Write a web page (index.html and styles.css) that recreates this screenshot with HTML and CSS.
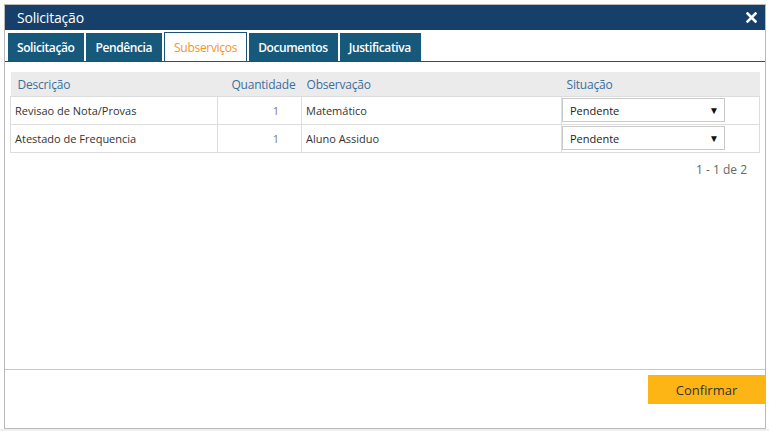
FILE: index.html
```html
<!DOCTYPE html>
<html lang="pt">
<head>
<meta charset="utf-8">
<title>Solicitação</title>
<link rel="stylesheet" href="styles.css">
</head>
<body>
<div class="dialog">
  <div class="titlebar">
    <span class="title">Solicitação</span>
    <svg class="close" width="11" height="11" viewBox="0 0 11 11"><path d="M1.5 1.5 L9.5 9.5 M9.5 1.5 L1.5 9.5" stroke="#fff" stroke-width="2.6" stroke-linecap="square"/></svg>
  </div>
  <div class="tabs">
    <div class="tab">Solicitação</div>
    <div class="tab">Pendência</div>
    <div class="tab active">Subserviços</div>
    <div class="tab">Documentos</div>
    <div class="tab">Justificativa</div>
  </div>
  <div class="content">
    <table class="grid">
      <colgroup>
        <col class="c1"><col class="c2"><col class="c3"><col class="c4">
      </colgroup>
      <thead>
        <tr><th>Descrição</th><th class="num">Quantidade</th><th>Observação</th><th>Situação</th></tr>
      </thead>
      <tbody>
        <tr>
          <td>Revisao de Nota/Provas</td><td class="num">1</td><td>Matemático</td>
          <td class="sel-cell"><div class="select"><span>Pendente</span><span class="arrow">▼</span></div></td>
        </tr>
        <tr>
          <td>Atestado de Frequencia</td><td class="num">1</td><td>Aluno Assiduo</td>
          <td class="sel-cell"><div class="select"><span>Pendente</span><span class="arrow">▼</span></div></td>
        </tr>
      </tbody>
    </table>
    <div class="pager">1 - 1 de 2</div>
  </div>
  <div class="footer">
    <button class="confirm">Confirmar</button>
  </div>
</div>
</body>
</html>
```
FILE: styles.css
```css
html, body {
  margin: 0;
  padding: 0;
}
body {
  font-family: "Open Sans", "Noto Sans", sans-serif;
  width: 769px;
  height: 431px;
  overflow: hidden;
  background: linear-gradient(#ffffff 0, #ffffff 429px, #efefef 429px);
}
.dialog {
  margin: 4px 0 0 4px;
  width: 760px;
  height: 423px;
  border: 1px solid #b9b9b9;
  background: #fff;
  display: flex;
  flex-direction: column;
}
.titlebar {
  height: 25px;
  background: #163f6a;
  display: flex;
  align-items: center;
  justify-content: space-between;
  padding: 0 8px 0 12px;
  flex: none;
}
.title {
  color: #fff;
  font-size: 14px;
  letter-spacing: -0.2px;
}
.close {
  display: block;
  margin-top: -1px;
}
.tabs {
  display: flex;
  gap: 2px;
  padding: 3px 0 0 3px;
  height: 28px;
  border-bottom: 1px solid #1d5379;
  flex: none;
}
.tab {
  background: #17597b;
  color: #fff;
  font-size: 12px;
  font-weight: 600;
  letter-spacing: -0.4px;
  padding: 0 10px 0 9px;
  display: flex;
  align-items: center;
  height: 28px;
}
.tab.active {
  background: #fff;
  color: #f7941d;
  font-weight: 400;
  letter-spacing: -0.3px;
  border: 1px solid #1d5379;
  border-bottom: none;
  height: 28px;
  margin-top: -1px;
  margin-bottom: -1px;
  padding: 0 9px;
}
.content {
  flex: 1;
  padding: 10px 6px 0 5px;
}
.grid {
  width: 749px;
  border-collapse: collapse;
  table-layout: fixed;
  font-size: 11px;
  color: #333;
}
.c1 { width: 207px; }
.c2 { width: 84px; }
.c3 { width: 260px; }
.c4 { width: 198px; }
.grid thead tr {
  background: #ebebeb;
  height: 24px;
}
.grid th {
  font-weight: 400;
  font-size: 12px;
  color: #3b6f9b;
  text-align: left;
  padding: 2px 0 0 7px;
  letter-spacing: -0.2px;
  white-space: nowrap;
}
.grid th.num {
  text-align: right;
  padding: 2px 6px 0 0;
}
.grid th:nth-child(3) { padding-left: 5px; }
.grid th:nth-child(4) { padding-left: 5px; }
.grid tbody tr {
  height: 28px;
}
.grid td {
  border: 1px solid #dddddd;
  padding: 0 0 0 4px;
  white-space: nowrap;
}
.grid td.num {
  text-align: right;
  padding: 0 22px 0 0;
  color: #7a7a7a;
}
.grid td.sel-cell {
  padding: 0;
}
.select {
  width: 163px;
  height: 24px;
  border: 1px solid #c9c9c9;
  display: flex;
  align-items: center;
  justify-content: space-between;
  padding: 0 5px 0 7px;
  box-sizing: border-box;
  color: #222;
}
.arrow {
  font-size: 10px;
  color: #111;
}
.pager {
  text-align: right;
  font-size: 12px;
  color: #666;
  padding: 8px 12px 0 0;
}
.footer {
  flex: none;
  height: 59px;
  border-top: 1px solid #c8c8c8;
  display: flex;
  justify-content: flex-end;
  align-items: flex-start;
  padding-top: 5px;
  box-sizing: border-box;
}
.confirm {
  width: 117px;
  height: 29px;
  border: none;
  background: #fdb515;
  color: #333;
  font-family: "Open Sans", "Noto Sans", sans-serif;
  font-size: 13px;
  padding: 0;
  margin: 0;
}
```
